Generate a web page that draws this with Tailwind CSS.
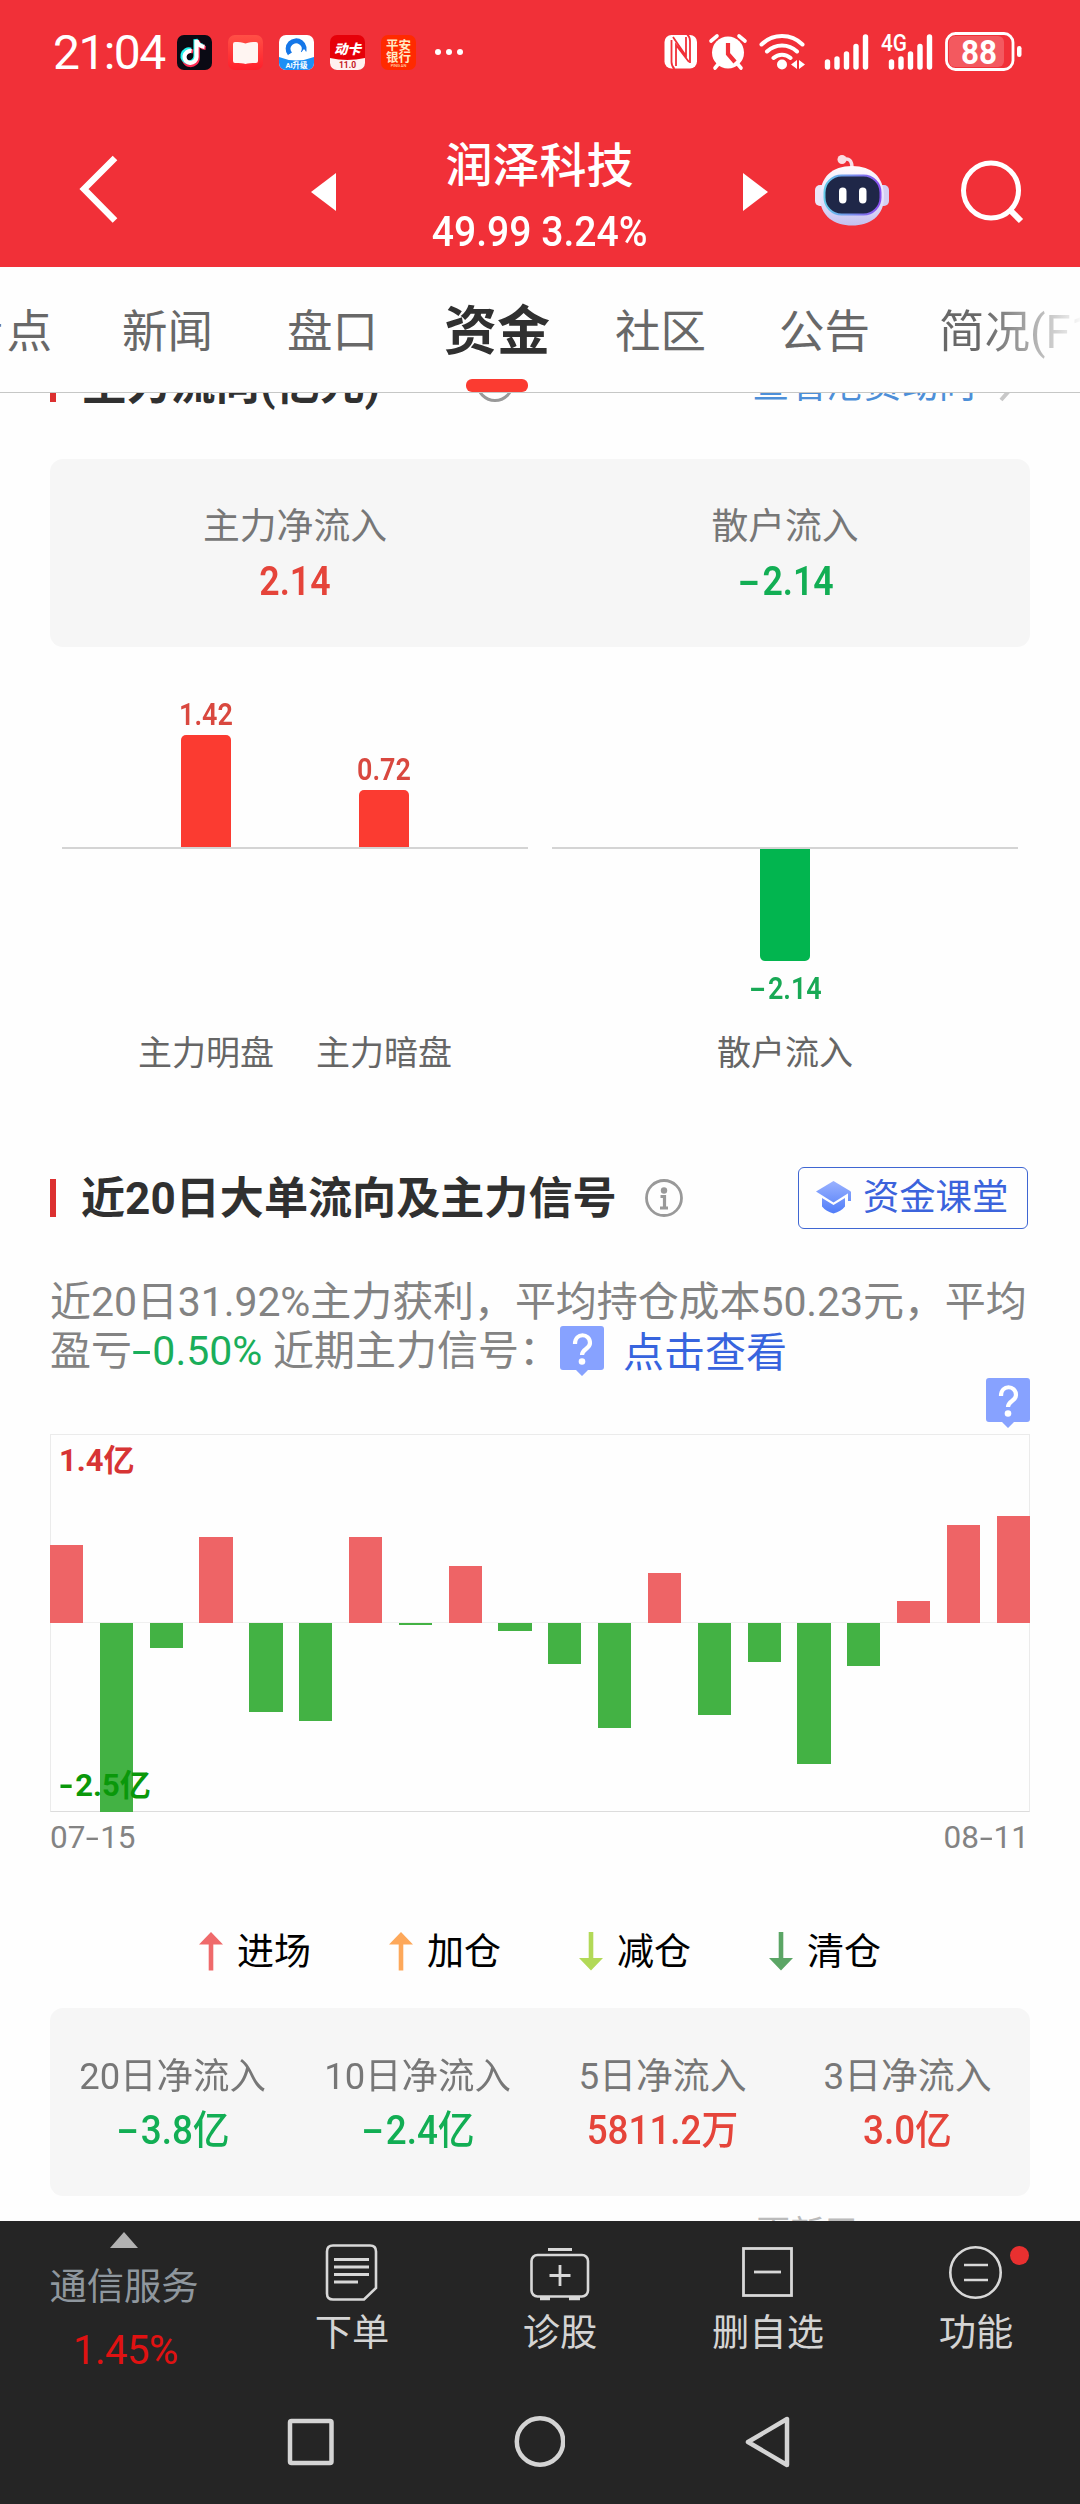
<!DOCTYPE html>
<html lang="zh-CN">
<head>
<meta charset="utf-8">
<title>润泽科技 - 资金</title>
<script src="https://cdn.jsdelivr.net/npm/@tailwindcss/browser@4"></script>
</head>
<body class="w-[1080px] h-[2504px] overflow-hidden bg-[#fefefe] font-[Roboto,'Noto_Sans_CJK_SC',sans-serif] flex flex-col whitespace-nowrap">

<header class="h-[267px] shrink-0 bg-[#f13038] text-white">
  <!-- Status bar -->
  <div class="h-[104px] flex items-center pl-[53px]">
    <span class="w-[124px] pt-[2px] text-[48px] leading-[56px] tracking-[-1.6px]">21:04</span>
    <div class="flex gap-4">
      <svg width="35" height="35" viewBox="0 0 35 35"><rect width="35" height="35" rx="7" fill="#0a0a14"/><g fill="none" stroke-width="4.2"><path d="M17 15.5a7 7 0 1 0 4.500 6.500V5c1 4 3.500 6.500 8 7" stroke="#ff2c55" transform="translate(-.8 1)"/><path d="M15 15.500a6.500 6.500 0 1 0 4.500 6.500V5c1 4 3.500 6 7 6.500" stroke="#25f4ee" transform="translate(-1 -.8)"/><path d="M14.500 16a6 6 0 1 0 5 6V5c.7 4 3.500 6.200 8 6.800" stroke="#fff"/></g></svg>
      <svg width="35" height="35" viewBox="0 0 35 35"><defs><linearGradient id="bk" x2="0" y2="1"><stop stop-color="#ff5046"/><stop offset="1" stop-color="#ff1f2b"/></linearGradient></defs><rect width="35" height="35" rx="7" fill="url(#bk)"/><path d="M5 9q0-2 2-2c4 0 7 0 10.500 1.500C21 7 24 7 28 7q2 0 2 2v17q0 2-2 2c-5 0-8 0-10.500 1C15 28 12 28 7 28q-2 0-2-2z" fill="#fff5f2"/></svg>
      <svg width="35" height="35" viewBox="0 0 35 35"><defs><clipPath id="qc"><rect width="35" height="35" rx="7"/></clipPath></defs><g clip-path="url(#qc)"><rect width="35" height="35" fill="#fff"/><path d="M11 19a8 8 0 1 1 13-1" fill="none" stroke="#1577e8" stroke-width="5"/><path d="M9 20q6-4 12-1l4-5q5 5 1 9H11z" fill="#fff"/><path d="M0 22q17 7 35 0v13H0z" fill="#1d8ff5"/><text x="17.500" y="33" font-size="7.500" font-weight="700" text-anchor="middle" fill="#fff">AI升级</text></g></svg>
      <svg width="35" height="35" viewBox="0 0 35 35"><g clip-path="url(#qc)"><rect width="35" height="35" fill="#e60009"/><path d="M0 23q17 4 35 0v12H0z" fill="#fff1f0"/><text x="17.500" y="18.500" font-size="13.500" font-weight="900" font-style="italic" text-anchor="middle" fill="#fff">动卡</text><text x="17.500" y="33" font-size="8.500" font-weight="700" text-anchor="middle" fill="#c4161c">11.0</text></g></svg>
      <svg width="35" height="35" viewBox="0 0 35 35"><rect width="35" height="35" rx="7" fill="#ff2a00"/><g fill="#ffe9c4" text-anchor="middle" font-weight="700"><text x="17.500" y="15" font-size="12.500">平安</text><text x="17.500" y="26.500" font-size="12.500">银行</text><text x="17.500" y="32" font-size="4" font-weight="400">PING AN</text></g></svg>
    </div>
    <div class="flex gap-[5px] ml-[19px]"><i class="size-[6px] rounded-full bg-white"></i><i class="size-[6px] rounded-full bg-white"></i><i class="size-[6px] rounded-full bg-white"></i></div>
    <svg class="ml-[197px]" width="366" height="44" viewBox="660 30 366 44" fill="#fff">
      <rect x="664.500" y="35" width="32.500" height="33.500" rx="7"/>
      <path d="M671.500 40v22q0 4 3 7M690 63V41q0-4-3-7" fill="none" stroke="#f13038" stroke-width="1.800"/>
      <path d="M676 66V45l13 17M686 37v19l-13-19" fill="none" stroke="#f13038" stroke-width="1.800"/>
      <circle cx="728" cy="52.500" r="16"/>
      <path d="M711 41l6-5M745 41l-6-5M715 68l5-6M741 68l-5-6" stroke="#fff" stroke-width="3.600" stroke-linecap="round"/>
      <path d="M728 43v11l7 8" fill="none" stroke="#f13038" stroke-width="4.200"/>
      <g fill="none" stroke="#fff" stroke-width="4" stroke-linecap="round"><path d="M761.500 44.500a29 29 0 0 1 41 0M767 51.500a21.500 21.500 0 0 1 30 0M773.500 58a12.500 12.500 0 0 1 17 0"/></g>
      <circle cx="782" cy="64.500" r="5"/><path d="M797 60v9l-6-4.500zM799 60v9l6-4.500z"/>
      <g stroke="#fff" stroke-width="5.400" stroke-linecap="round"><path d="M827.500 62v5M837 59v8M846.500 54v13M856 46.500v20.500M865.500 37v30"/><path d="M891.500 62v5M901 59v8M910.500 54v13M920 46.500v20.500M929.500 37v30"/></g>
      <text x="881" y="51" font-size="23" font-weight="500" textLength="26" lengthAdjust="spacingAndGlyphs">4G</text>
      <rect x="946.500" y="33.500" width="66.500" height="36" rx="9" fill="none" stroke="#fff" stroke-width="2.800"/>
      <rect x="949" y="36" width="55" height="31" rx="6" fill-opacity=".2"/>
      <rect x="1017" y="46" width="4.500" height="11" rx="2.200"/>
      <text x="961" y="64" font-size="33.500" font-weight="700" textLength="36" lengthAdjust="spacingAndGlyphs">88</text>
    </svg>
  </div>
  <!-- Stock title -->
  <div class="h-[163px] flex">
    <svg class="ml-[76px] mt-[48px] shrink-0" width="46" height="74" viewBox="0 0 46 74" fill="none" stroke="#fff" stroke-width="6.500"><path d="M39 6L8 37l31 31.500"/></svg>
    <svg class="ml-[189px] mt-[69px] shrink-0" width="25" height="39" viewBox="0 0 25 39" fill="#fff"><path d="M25 0v38L0 19z"/></svg>
    <div class="w-[407px] shrink-0 flex flex-col items-center text-center">
      <h1 class="mt-[35px] h-[54px] text-[47px] leading-[54px] font-medium">润泽科技</h1>
      <p class="mt-[10px] text-[43px] leading-[56px] font-medium scale-x-[0.91]">49.99 3.24%</p>
    </div>
    <svg class="mt-[69px] shrink-0" width="25" height="39" viewBox="0 0 25 39" fill="#fff"><path d="M0 0v38l25-19z"/></svg>
    <svg class="ml-[44px] mt-[50px] shrink-0" width="80" height="72" viewBox="0 0 80 72">
      <defs><linearGradient id="hd" x2="0" y2="1"><stop stop-color="#fffafc"/><stop offset=".6" stop-color="#e4dffa"/><stop offset="1" stop-color="#c3c0ee"/></linearGradient><linearGradient id="rm"><stop stop-color="#63c9e8"/><stop offset="1" stop-color="#8a4dee"/></linearGradient></defs>
      <path d="M31 6c6-3 9 1 9 8" fill="none" stroke="#f7dfe8" stroke-width="3.500"/><circle cx="30" cy="5.500" r="4.500" fill="#fbdde2"/>
      <rect x="3" y="31" width="12" height="21" rx="5" fill="#ebe6f7"/><rect x="65" y="31" width="12" height="21" rx="5" fill="#d3cef3"/>
      <path d="M40 12c20 0 32 11 32 31 0 19-14 28.500-32 28.500S8 62 8 43C8 23 20 12 40 12z" fill="url(#hd)"/>
      <rect x="12.500" y="21.500" width="56" height="39" rx="17" fill="#1f2748" stroke="url(#rm)" stroke-width="2"/>
      <rect x="27" y="33.500" width="7.500" height="16" rx="3.700" fill="#fff"/><rect x="47" y="33.500" width="7.500" height="16" rx="3.700" fill="#fff"/>
    </svg>
    <svg class="ml-[67px] mt-[53px] shrink-0" width="68" height="68" viewBox="0 0 68 68" fill="none" stroke="#fff" stroke-width="5"><circle cx="32" cy="33.500" r="27.500"/><path d="M51 53l11 11" stroke-width="6"/></svg>
  </div>
</header>

<!-- Tabs -->
<nav class="relative h-[126px] shrink-0 border-b border-[#c6c7c6] bg-[#fefefe] text-[#686868] text-[45.500px] leading-[131px]">
  <div class="flex h-full overflow-hidden">
    <span class="-ml-[42px] w-[164px] shrink-0 tracking-[3px]">看点</span>
    <span class="w-[165px] shrink-0">新闻</span>
    <span class="w-[157px] shrink-0">盘口</span>
    <span class="w-[171px] shrink-0 text-[#303030] text-[53px] font-bold">资金</span>
    <span class="w-[164px] shrink-0">社区</span>
    <span class="w-[160px] shrink-0">公告</span>
    <span class="shrink-0 bg-linear-to-r from-[#686868] from-[45px] to-[#fefefe] to-[145px] bg-clip-text text-transparent">简况(F10)</span>
  </div>
  <i class="absolute left-[466px] top-[112px] w-[62px] h-[13px] rounded-[6px] bg-[#fb3b31]"></i>
</nav>

<main class="h-[1828px] shrink-0 overflow-hidden px-[50px]">
  <div class="-mt-[40px] h-[60px] flex items-center">
    <i class="w-[6px] h-[38px] bg-[#dc3030]"></i>
    <h2 class="ml-[26px] w-[389px] pt-[3px] text-[44.500px] leading-[60px] font-bold text-[#303030]">主力流向(亿元)</h2>
    <svg width="40" height="40" viewBox="0 0 40 40"><circle cx="24" cy="20" r="17.500" fill="none" stroke="#999" stroke-width="3"/><circle cx="24" cy="12" r="3" fill="#999"/><path d="M20 18h5v10M20 28h9" stroke="#999" stroke-width="3" fill="none"/></svg>
    <a class="ml-[241px] pt-[3px] text-[37.300px] leading-[60px] text-[#4d8fd8]">查看港资动向</a>
    <svg class="ml-[20px]" width="24" height="40" viewBox="0 0 24 40" fill="none" stroke="#c8c8c8" stroke-width="4"><path d="M5 4l15 16L5 37"/></svg>
  </div>

  <section class="mt-[46px] h-[188px] rounded-[13px] bg-[#f6f6f6] grid grid-cols-2 text-center pt-[41px]">
    <div><p class="text-[36.800px] leading-[54px] text-[#777]">主力净流入</p><p class="text-[41px] leading-[54px] font-semibold text-[#e5443a] scale-x-[0.87]">2.14</p></div>
    <div><p class="text-[36.800px] leading-[54px] text-[#777]">散户流入</p><p class="text-[41px] leading-[54px] font-semibold text-[#12ae54] scale-x-[0.87]"><span class="inline-block scale-x-[1.8] ml-[7px] mr-[8px]">-</span>2.14</p></div>
  </section>

  <!-- Order flow bars -->
  <section class="h-[507px] px-[12px] grid grid-cols-2 gap-x-[24px] text-[31px] leading-[36px] font-semibold text-center">
    <div>
      <div class="h-[202px] border-b-2 border-[#d4d4d4] pl-[55px] flex items-end">
        <div class="w-[178px] flex flex-col items-center text-[#d9483f]"><span class="scale-x-[0.87]">1.42</span><i class="mt-[2px] w-[50px] rounded-t-[5px] bg-[#fb3b31]" style="height:112px"></i></div>
        <div class="w-[178px] flex flex-col items-center text-[#d9483f]"><span class="scale-x-[0.87]">0.72</span><i class="mt-[2px] w-[50px] rounded-t-[5px] bg-[#fb3b31]" style="height:57px"></i></div>
      </div>
      <div class="mt-[180px] pl-[55px] flex text-[34px] leading-[48px] font-normal text-[#666]"><span class="w-[178px]">主力明盘</span><span class="w-[178px]">主力暗盘</span></div>
    </div>
    <div>
      <div class="h-[202px] border-b-2 border-[#d4d4d4]"></div>
      <div class="h-[180px] flex flex-col items-center text-[#18a955]"><i class="w-[50px] rounded-b-[5px] bg-[#02b54f]" style="height:112px"></i><span class="mt-[10px] scale-x-[0.87]"><span class="inline-block scale-x-[1.800] ml-[6px] mr-[6px]">-</span>2.14</span></div>
      <div class="text-[34px] leading-[48px] font-normal text-[#666]">散户流入</div>
    </div>
  </section>

  <div class="h-[87px] flex items-center">
    <i class="w-[6px] h-[38px] bg-[#dc3030]"></i>
    <h2 class="ml-[25px] w-[563px] pt-[2px] text-[44.100px] leading-[60px] font-bold text-[#303030]">近20日大单流向及主力信号</h2>
    <svg width="40" height="40" viewBox="0 0 40 40"><circle cx="20" cy="20" r="17.500" fill="none" stroke="#999" stroke-width="2.800"/><circle cx="20" cy="12.500" r="3.200" fill="#999"/><path d="M16.500 18.500h4V30M16 30h8" stroke="#999" stroke-width="3.200" fill="none"/></svg>
    <a class="ml-[114px] w-[230px] h-[62px] border-[1.500px] border-[#3f66d2] rounded-[6px] flex items-center pl-[17px] text-[36.300px] leading-[56px] text-[#3b63dc]">
      <svg class="mr-[12px]" width="35" height="33" viewBox="0 0 35 33"><defs><linearGradient id="cp" x1="0" y1="0" x2="0" y2="33" gradientUnits="userSpaceOnUse"><stop stop-color="#9ab2ff"/><stop offset="1" stop-color="#4f7cf8"/></linearGradient></defs><g fill="url(#cp)"><path d="M17.500 0L35 10.500 17.500 21.500 0 10.500z"/><path d="M6 17l11.500 7L29 17v8.500q-4 5-11.500 7-7.500-2-11.500-7z"/><path d="M32 11h3v9h-3z"/></g></svg><span class="pt-px">资金课堂</span></a>
  </div>

  <div class="mt-[37px] h-[99px] text-[41px] leading-[48px] text-[#838383]">
    <p class="tracking-[-0.080px]">近20日31.92%主力获利，平均持仓成本50.23元，平均</p>
    <div class="flex">
      <span class="pt-px">盈亏</span><span class="pt-px w-[141px] text-[#1aae5a]"><span class="inline-block scale-x-[1.700] ml-[4px] mr-[5px]">-</span>0.50%</span><span class="pt-px w-[287px]">近期主力信号：</span>
      <svg width="44" height="50" viewBox="0 0 44 50"><path d="M3 0h38q3 0 3 3v38q0 3-3 3H28l-6 6-6-6H3q-3 0-3-3V3q0-3 3-3z" fill="#87a2ff"/><path d="M15 18c0-12 15-11 15-1 0 6-8 6-8 12" fill="none" stroke="#fff" stroke-width="4.200"/><circle cx="22" cy="35.500" r="3.300" fill="#fff"/></svg>
      <a class="ml-[19px] pt-[3px] text-[#3764de]">点击查看</a>
    </div>
  </div>
  <div class="h-[57px] flex justify-end">
    <svg class="mt-[1px]" width="44" height="50" viewBox="0 0 44 50"><path d="M3 0h38q3 0 3 3v38q0 3-3 3H28l-6 6-6-6H3q-3 0-3-3V3q0-3 3-3z" fill="#87a2ff"/><path d="M15 18c0-12 15-11 15-1 0 6-8 6-8 12" fill="none" stroke="#fff" stroke-width="4.200"/><circle cx="22" cy="35.500" r="3.300" fill="#fff"/></svg>
  </div>

  <!-- 20-day net flow chart -->
  <section class="relative h-[378px]">
    <div class="absolute inset-0 border border-[#ebebeb] border-b-[#dcdcdc]"></div>
    <div class="absolute inset-x-0 top-[188px] h-px bg-[#f0f0f0]"></div>
    <div class="relative h-full flex justify-between items-start">
      <i class="w-[33.200px] bg-[#ee6466]" style="margin-top:111px;height:78px"></i>
      <i class="w-[33.200px] bg-[#43b244]" style="margin-top:189px;height:189px"></i>
      <i class="w-[33.200px] bg-[#43b244]" style="margin-top:189px;height:25px"></i>
      <i class="w-[33.200px] bg-[#ee6466]" style="margin-top:103px;height:86px"></i>
      <i class="w-[33.200px] bg-[#43b244]" style="margin-top:189px;height:89px"></i>
      <i class="w-[33.200px] bg-[#43b244]" style="margin-top:189px;height:98px"></i>
      <i class="w-[33.200px] bg-[#ee6466]" style="margin-top:102.500px;height:86.500px"></i>
      <i class="w-[33.200px] bg-[#43b244]" style="margin-top:189px;height:1.500px"></i>
      <i class="w-[33.200px] bg-[#ee6466]" style="margin-top:131.500px;height:57.500px"></i>
      <i class="w-[33.200px] bg-[#43b244]" style="margin-top:189px;height:7.500px"></i>
      <i class="w-[33.200px] bg-[#43b244]" style="margin-top:189px;height:41px"></i>
      <i class="w-[33.200px] bg-[#43b244]" style="margin-top:189px;height:105px"></i>
      <i class="w-[33.200px] bg-[#ee6466]" style="margin-top:138.500px;height:50.500px"></i>
      <i class="w-[33.200px] bg-[#43b244]" style="margin-top:189px;height:92px"></i>
      <i class="w-[33.200px] bg-[#43b244]" style="margin-top:189px;height:38.500px"></i>
      <i class="w-[33.200px] bg-[#43b244]" style="margin-top:189px;height:141px"></i>
      <i class="w-[33.200px] bg-[#43b244]" style="margin-top:189px;height:43px"></i>
      <i class="w-[33.200px] bg-[#ee6466]" style="margin-top:166.500px;height:22.500px"></i>
      <i class="w-[33.200px] bg-[#ee6466]" style="margin-top:90.500px;height:98.500px"></i>
      <i class="w-[33.200px] bg-[#ee6466]" style="margin-top:81.500px;height:107.500px"></i>
    </div>
    <span class="absolute left-[9px] top-[9px] text-[31px] leading-[36px] font-bold text-[#d73434]">1.4亿</span>
    <span class="absolute left-[10px] top-[334px] text-[31px] leading-[36px] font-bold text-[#0a980a]"><span class="inline-block scale-x-[1.300] mr-[3px]">-</span>2.5亿</span>
  </section>
  <div class="h-[50px] pr-px pt-px flex justify-between text-[31.500px] leading-[50px] text-[#838383]">
    <span>07<span class="inline-block scale-x-[1.500] mx-[3px]">-</span>15</span><span>08<span class="inline-block scale-x-[1.500] mx-[3px]">-</span>11</span>
  </div>

  <!-- Signal legend -->
  <div class="mt-[65px] h-[48px] pl-[149px] flex text-[37px] leading-[48px] text-black">
    <span class="w-[190px] flex items-center gap-[14px]"><svg width="24" height="39" viewBox="0 0 24 39" fill="#ef6a6b"><path d="M12 0l12 12.500h-9.700V38.500H9.700V12.500H0z"/></svg><span class="pt-[3px]">进场</span></span>
    <span class="w-[190px] flex items-center gap-[14px]"><svg width="24" height="39" viewBox="0 0 24 39" fill="#fda85a"><path d="M12 0l12 12.500h-9.700V38.500H9.700V12.500H0z"/></svg><span class="pt-[3px]">加仓</span></span>
    <span class="w-[190px] flex items-center gap-[14px]"><svg width="24" height="39" viewBox="0 0 24 39" fill="#b2d957"><path d="M12 38.500l12-12.500h-9.700V0H9.700v26H0z"/></svg><span class="pt-[3px]">减仓</span></span>
    <span class="flex items-center gap-[14px]"><svg width="24" height="39" viewBox="0 0 24 39" fill="#5ba565"><path d="M12 38.500l12-12.500h-9.700V0H9.700v26H0z"/></svg><span class="pt-[3px]">清仓</span></span>
  </div>

  <section class="mt-[33px] h-[188px] rounded-[13px] bg-[#f6f6f6] grid grid-cols-4 text-center pt-[42px] text-[36.800px] leading-[54px] text-[#777]">
    <div><p class="scale-x-[0.99]">20日净流入</p><p class="text-[40px] font-medium text-[#12ae54] scale-x-[0.92]"><span class="inline-block scale-x-[1.800] ml-[7px] mr-[7px]">-</span>3.8亿</p></div>
    <div><p class="scale-x-[0.99]">10日净流入</p><p class="text-[40px] font-medium text-[#12ae54] scale-x-[0.92]"><span class="inline-block scale-x-[1.800] ml-[7px] mr-[7px]">-</span>2.4亿</p></div>
    <div><p>5日净流入</p><p class="text-[40px] font-medium text-[#e5443a] scale-x-[0.92]">5811.2万</p></div>
    <div><p>3日净流入</p><p class="text-[40px] font-medium text-[#e5443a] scale-x-[0.92]">3.0亿</p></div>
  </section>
  <p class="mt-[17px] text-right text-[34px] leading-[40px] text-[#bbb]">更新于2025-08-11</p>
</main>

<footer class="h-[283px] shrink-0 bg-[#252525] text-[#d4d4d4]">
  <div class="h-[164px] flex text-[37.300px] leading-[48px] text-center">
    <div class="w-[248px] flex flex-col items-center text-[#8f979e]">
      <svg class="mt-[11px]" width="28" height="16" viewBox="0 0 28 16" fill="#b2b2b2"><path d="M14 0l14 16H0z"/></svg>
      <span class="mt-[15px]">通信服务</span>
      <span class="mt-[16px] ml-[3px] text-[40px] tracking-[-0.500px] text-[#e01212]">1.45%</span>
    </div>
    <div class="w-[208px] flex flex-col items-center">
      <svg class="mt-[21px] mb-[7px]" width="60" height="60" viewBox="0 0 60 60" fill="none" stroke="#d8d8d8" stroke-width="2.600"><path d="M11 3.500h37q6 0 6 6V46L42 57.500H11q-6 0-6-6V9.500q0-6 6-6z"/><path d="M12 17.500h35M12 25h35M12 32.500h35M12 40h24" stroke-width="3"/></svg>
      <span>下单</span>
    </div>
    <div class="w-[208px] flex flex-col items-center">
      <svg class="mt-[21px] mb-[7px]" width="60" height="60" viewBox="0 0 60 60" fill="none" stroke="#d8d8d8" stroke-width="2.600"><rect x="1.500" y="13" width="56.500" height="41.500" rx="6"/><path d="M18 7.500h24M30 23v21M19.500 33.500h21" stroke-width="2.800"/><path d="M10 56.500h10M39 56.500h11" stroke-width="3.500"/></svg>
      <span>诊股</span>
    </div>
    <div class="w-[208px] flex flex-col items-center">
      <svg class="mt-[21px] mb-[7px]" width="60" height="60" viewBox="0 0 60 60" fill="none" stroke="#d8d8d8" stroke-width="2.800"><rect x="5.500" y="6.500" width="48" height="47"/><path d="M16 30h27"/></svg>
      <span>删自选</span>
    </div>
    <div class="relative w-[208px] flex flex-col items-center">
      <svg class="mt-[21px] mb-[7px]" width="60" height="60" viewBox="0 0 60 60" fill="none" stroke="#d8d8d8" stroke-width="2.600"><circle cx="29.500" cy="30.500" r="25.200"/><path d="M18 23h24M18 38h24"/></svg>
      <i class="absolute left-[138px] top-[25px] size-[19px] rounded-full bg-[#e93030]"></i>
      <span>功能</span>
    </div>
  </div>
  <!-- System navigation -->
  <div class="h-[112px] flex items-center pl-[284px] gap-[198px]">
    <svg width="54" height="54" viewBox="0 0 54 54" fill="none" stroke="#d4d4d4" stroke-width="4.500"><rect x="6" y="7" width="41.500" height="42" rx="1.500"/></svg>
    <svg class="-ml-[25px]" width="54" height="54" viewBox="0 0 54 54" fill="none" stroke="#d4d4d4" stroke-width="4.500"><circle cx="29" cy="27.500" r="23.200"/></svg>
    <svg class="-ml-[22px]" width="54" height="54" viewBox="0 0 54 54" fill="none" stroke="#d4d4d4" stroke-width="4.500" stroke-linejoin="round"><path d="M46 5v46L7 28z"/></svg>
  </div>
</footer>
</body>
</html>
